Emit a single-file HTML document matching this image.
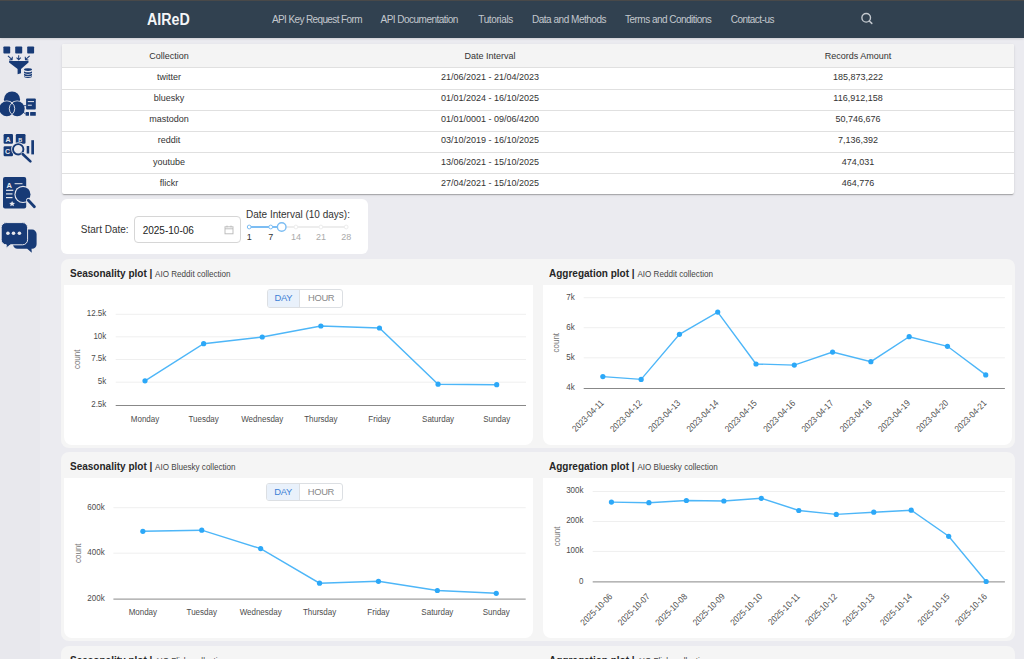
<!DOCTYPE html>
<html><head><meta charset="utf-8"><title>AIReD</title>
<style>
*{box-sizing:border-box;margin:0;padding:0}
html,body{width:1024px;height:659px;overflow:hidden}
body{background:#ebebf0;font-family:"Liberation Sans", sans-serif;position:relative}
.abs{position:absolute}
#topline{left:0;top:0;width:1024px;height:1px;background:#4a4a4a}
#hdr{left:0;top:1px;width:1024px;height:37.3px;background:#314150;box-shadow:0 1px 2px rgba(0,0,0,.12);z-index:3}
#side{left:0;top:38px;width:40px;height:621px;background:#e8e8ed}
.nav{position:absolute;top:13.3px;font-size:10px;color:#c3c8ce;white-space:nowrap;line-height:12px}
#logo{position:absolute;left:147.3px;top:10px;font-size:16px;font-weight:bold;color:#f4f5f7;line-height:18px;transform:scaleX(0.89);transform-origin:0 0}
#tbl{left:62px;top:44px;width:952px;height:149.5px;background:#fff;border-radius:2px;overflow:hidden;box-shadow:0 2px 1px -1px rgba(0,0,0,.17),0 1px 1px 0 rgba(0,0,0,.1),0 1px 3px 0 rgba(0,0,0,.1);font-size:9px;color:#333}
.row{position:absolute;left:0;width:953px;height:21px;border-top:1px solid #e2e2e2}
.row span{position:absolute;top:5.5px;line-height:10px;white-space:nowrap}
#tbl span{position:absolute;line-height:10px;white-space:nowrap}
.c1{left:107px;transform:translateX(-50%)}
.c2{left:428px;transform:translateX(-50%)}
.c3{left:796px;transform:translateX(-50%)}
#filter{left:61px;top:199px;width:307px;height:55px;background:#fff;border-radius:6px}
.rowc{position:absolute;left:61px;width:954px;height:188.5px;background:#f5f5f5;border-radius:8px}
.plot{position:absolute;background:#fff;border-radius:0 0 8px 8px;height:160px}
.ttl{position:absolute;white-space:nowrap;font-size:11.5px;font-weight:bold;color:#262626;line-height:12px;transform:scaleX(0.87);transform-origin:0 0}
.ttl span{font-weight:normal;font-size:9.3px;color:#444}
svg text.tk{font-family:"Liberation Sans", sans-serif;font-size:9px;fill:#4d4d4d}
svg text.cnt{fill:#777}
.seg{position:absolute;width:76.5px;height:18.5px;border:1px solid #dcdfe3;border-radius:3px;background:#fff;font-size:9px;overflow:hidden}
.seg .d{position:absolute;left:0;top:0;width:32.8px;letter-spacing:-0.3px;font-size:9.4px;height:100%;background:#e9f1fb;border-right:1px solid #dcdfe3;color:#3d7fd6;text-align:center;line-height:16.5px}
.seg .h{position:absolute;left:32.8px;letter-spacing:-0.35px;font-size:9.4px;top:0;right:0;height:100%;color:#888;text-align:center;line-height:16.5px}
</style></head><body>
<div id="topline" class="abs"></div>
<div id="hdr" class="abs">
 <div id="logo">AIReD</div>
 <div class="nav" style="left:272px;letter-spacing:-0.62px">API Key Request Form</div>
 <div class="nav" style="left:380.5px;letter-spacing:-0.52px">API Documentation</div>
 <div class="nav" style="left:478.3px;letter-spacing:-0.38px">Tutorials</div>
 <div class="nav" style="left:532px;letter-spacing:-0.48px">Data and Methods</div>
 <div class="nav" style="left:625px;letter-spacing:-0.52px">Terms and Conditions</div>
 <div class="nav" style="left:730.7px;letter-spacing:-0.5px">Contact-us</div>
 <svg class="abs" style="left:858px;top:10px" width="18" height="18" viewBox="858 11 18 18">
  <circle cx="866.2" cy="17.8" r="4.3" fill="none" stroke="#c4c9cf" stroke-width="1.4"/>
  <path d="M869.3 21 L871.8 23.4" stroke="#c4c9cf" stroke-width="1.5" stroke-linecap="round"/>
 </svg>
</div>
<div id="side" class="abs"></div>

<svg class="ic" width="40" height="621" viewBox="0 38 40 621" style="position:absolute;left:0;top:38px">
 <g fill="#173a76">
  <!-- icon1 funnel -->
  <rect x="3.4" y="46.4" width="6.8" height="7.2" rx="0.8"/>
  <rect x="15.2" y="46.4" width="7" height="7.2" rx="0.8"/>
  <rect x="27.2" y="46.4" width="6.9" height="7.2" rx="0.8"/>
  <path d="M8.3 55.6 L11.6 58.6 L11.9 56.8 L12.9 56.8 L12.6 60.2 L9.2 60.5 L9.2 59.5 L10.9 59.3 L7.6 56.3Z"/>
  <path d="M18.2 55.2 h1 v3.4 l1.3-1.3 0.7 0.7 -2.5 2.4 -2.5-2.4 0.7-0.7 1.3 1.3Z"/>
  <path d="M29.3 55.6 L26 58.6 L25.7 56.8 L24.7 56.8 L25 60.2 L28.4 60.5 L28.4 59.5 L26.7 59.3 L30 56.3Z"/>
  <path d="M9.1 61.1 H28.5 V62.6 L21 69 V73.3 L17.6 74.2 V69 L9.1 62.6Z"/>
  <ellipse cx="28" cy="69.6" rx="4" ry="1.4"/>
  <path d="M24 70.9 a4 1.4 0 0 0 8 0 v1.6 a4 1.4 0 0 1 -8 0Z"/>
  <path d="M24 73.3 a4 1.4 0 0 0 8 0 v1.6 a4 1.4 0 0 1 -8 0Z"/>
  <path d="M24 75.7 a4 1.4 0 0 0 8 0 v0.8 a4 1.4 0 0 1 -8 0Z"/>
 </g>
 <g>
  <!-- icon2 venn -->
  <circle cx="12" cy="99.5" r="8.1" fill="#173a76"/>
  <circle cx="6.8" cy="108.7" r="7.5" fill="#e8e8ed" stroke="#e8e8ed" stroke-width="1.6"/>
  <circle cx="17.2" cy="108.7" r="7.5" fill="#e8e8ed" stroke="#e8e8ed" stroke-width="1.6"/>
  <circle cx="6.8" cy="108.7" r="7.5" fill="#173a76"/>
  <circle cx="17.2" cy="108.7" r="7.5" fill="#173a76"/>
  <path d="M12 102.9 A7.5 7.5 0 0 1 12 114.5 A7.5 7.5 0 0 1 12 102.9Z" fill="#173a76" stroke="#e8e8ed" stroke-width="0.9"/>
  <rect x="26.1" y="98.4" width="9.7" height="11" rx="0.9" fill="#173a76"/>
  <rect x="27.8" y="101.1" width="6.2" height="1" fill="#e8e8ed"/>
  <rect x="27.8" y="104.7" width="4" height="1" fill="#e8e8ed"/>
  <path d="M23.5 105.6 H26.3" stroke="#173a76" stroke-width="0.8"/>
  <path d="M23 112.2 L25.6 113.9" stroke="#173a76" stroke-width="0.9"/>
  <rect x="25.6" y="112" width="3.4" height="3.8" rx="0.5" fill="#173a76"/>
  <rect x="30.1" y="112" width="5.7" height="3.8" rx="0.5" fill="#173a76"/>
 </g>
 <g fill="#173a76">
  <!-- icon3 abc magnifier -->
  <rect x="3.6" y="134.1" width="9.4" height="9.7" rx="1.2"/>
  <rect x="15.8" y="134.1" width="9.7" height="9.7" rx="1.2"/>
  <rect x="3.6" y="146.2" width="9.4" height="10.1" rx="1.2"/>
  <rect x="26.7" y="146" width="2.5" height="7.5"/>
  <rect x="31.3" y="140.2" width="2.7" height="14.2"/>
 </g>
 <g fill="none" stroke="#e8e8ed" stroke-width="1.6"><circle cx="18.2" cy="149.3" r="6.2"/></g>
 <circle cx="18.2" cy="149.3" r="5.1" fill="#e8e8ed"/>
 <circle cx="18.2" cy="149.3" r="5.2" fill="none" stroke="#173a76" stroke-width="1.9"/>
 <path d="M22.6 154 L30.4 161.4" stroke="#e8e8ed" stroke-width="3.8" stroke-linecap="round"/>
 <path d="M22.6 154 L30.4 161.4" stroke="#173a76" stroke-width="2.6" stroke-linecap="round"/>
 <g fill="#e8e8ed" font-family="Liberation Sans" font-weight="bold" font-size="7">
  <text x="5.4" y="142">A</text><text x="18.3" y="141.6" font-size="5.5">B</text><text x="5" y="154">C</text>
 </g>
 <g fill="#173a76">
  <!-- icon4 document -->
  <rect x="3" y="177" width="23.2" height="31.4" rx="2"/>
 </g>
 <g fill="#e8e8ed">
  <text x="6.4" y="187.5" font-family="Liberation Sans" font-weight="bold" font-size="7.5">A</text>
  <rect x="14.6" y="183.2" width="7.9" height="1"/>
  <rect x="6" y="189.7" width="7.3" height="1.2"/>
  <rect x="6" y="193.3" width="6.5" height="1.2"/>
  <rect x="6" y="197" width="6.5" height="1.2"/>
  <path d="M12.1 200.9 l0.9 1.9 2.05 0.2 -1.55 1.35 0.45 2 -1.85-1.05 -1.85 1.05 0.45-2 -1.55-1.35 2.05-0.2Z"/>
 </g>
 <circle cx="23" cy="194.4" r="8.6" fill="#e8e8ed"/>
 <circle cx="23" cy="194.4" r="7.5" fill="#173a76"/>
 <path d="M28.3 200.2 L34.4 206.8" stroke="#e8e8ed" stroke-width="4.4" stroke-linecap="round"/>
 <path d="M28.3 200.2 L34.4 206.8" stroke="#173a76" stroke-width="2.8" stroke-linecap="round"/>
 <g fill="#173a76">
  <!-- icon5 chat -->
  <path d="M17.5 229.6 h14.6 a4.5 4.5 0 0 1 4.5 4.5 v10.2 a4.5 4.5 0 0 1 -4.5 4.5 h-0.6 l0.3 3.9 -4.6-3.9 h-9.7 a4.5 4.5 0 0 1 -4.5 -4.5 v-10.2 a4.5 4.5 0 0 1 4.5 -4.5Z"/>
 </g>
 <path d="M6.2 222.6 h16.4 a5 5 0 0 1 5 5 v12.2 a5 5 0 0 1 -5 5 h-12 l-4.6 3.4 0.3-3.4 h-0.1 a5 5 0 0 1 -5 -5 v-12.2 a5 5 0 0 1 5 -5Z" fill="#173a76" stroke="#e8e8ed" stroke-width="1"/>
 <g fill="#e8e8ed"><circle cx="7.9" cy="233.3" r="1.8"/><circle cx="13.5" cy="233.3" r="1.8"/><circle cx="19.4" cy="233.3" r="1.8"/></g>
</svg>

<div id="tbl" class="abs">
 <div class="abs" style="left:0;top:0;width:952px;height:23px;background:#f4f4f4"></div>
 <div class="abs" style="left:0;top:23px;width:952px;height:1px;background:#e0e0e0"></div>
 <div class="abs" style="left:0;top:45px;width:952px;height:1px;background:#e0e0e0"></div>
 <div class="abs" style="left:0;top:66px;width:952px;height:1px;background:#e0e0e0"></div>
 <div class="abs" style="left:0;top:87px;width:952px;height:1px;background:#e0e0e0"></div>
 <div class="abs" style="left:0;top:108px;width:952px;height:1px;background:#e0e0e0"></div>
 <div class="abs" style="left:0;top:129px;width:952px;height:1px;background:#e0e0e0"></div>
 <span class="c1" style="top:6.5px">Collection</span><span class="c2" style="top:6.5px">Date Interval</span><span class="c3" style="top:6.5px">Records Amount</span>
 <span class="c1" style="top:27.9px">twitter</span><span class="c2" style="top:27.9px">21/06/2021 - 21/04/2023</span><span class="c3" style="top:27.9px">185,873,222</span>
 <span class="c1" style="top:48.9px">bluesky</span><span class="c2" style="top:48.9px">01/01/2024 - 16/10/2025</span><span class="c3" style="top:48.9px">116,912,158</span>
 <span class="c1" style="top:69.9px">mastodon</span><span class="c2" style="top:69.9px">01/01/0001 - 09/06/4200</span><span class="c3" style="top:69.9px">50,746,676</span>
 <span class="c1" style="top:91.1px">reddit</span><span class="c2" style="top:91.1px">03/10/2019 - 16/10/2025</span><span class="c3" style="top:91.1px">7,136,392</span>
 <span class="c1" style="top:112.9px">youtube</span><span class="c2" style="top:112.9px">13/06/2021 - 15/10/2025</span><span class="c3" style="top:112.9px">474,031</span>
 <span class="c1" style="top:133.5px">flickr</span><span class="c2" style="top:133.5px">27/04/2021 - 15/10/2025</span><span class="c3" style="top:133.5px">464,776</span>
</div>
<div id="filter" class="abs">
 <div class="abs" style="left:19.8px;top:25px;font-size:10px;color:#333;line-height:12px;white-space:nowrap">Start Date:</div>
 <div class="abs" style="left:73.2px;top:17.2px;width:106.4px;height:27px;border:1px solid #d6d6d6;border-radius:4px;background:#fff">
  <div class="abs" style="left:7.5px;top:7.8px;font-size:10px;color:#222;line-height:12px">2025-10-06</div>
  <svg class="abs" style="left:89px;top:8px" width="10" height="10" viewBox="0 0 10 10"><rect x="1" y="1.8" width="8" height="7" fill="none" stroke="#b9b9b9" stroke-width="0.9"/><path d="M1 3.8 H9" stroke="#b9b9b9" stroke-width="0.9"/><path d="M3 0.6 V2.4 M7 0.6 V2.4" stroke="#b9b9b9" stroke-width="0.9"/></svg>
 </div>
 <div class="abs" style="left:185px;top:9.5px;font-size:10px;color:#333;line-height:12px;white-space:nowrap">Date Interval (10 days):</div>
 <svg class="abs" style="left:180px;top:18px" width="120" height="30" viewBox="241 217 120 30">
  <rect x="247.5" y="226" width="100" height="2" rx="1" fill="#ededed"/>
  <rect x="247.5" y="226" width="34" height="2" rx="1" fill="#7cbdf3"/>
  <circle cx="249.2" cy="227" r="1.9" fill="#fff" stroke="#7cbdf3" stroke-width="1"/>
  <circle cx="270.7" cy="227" r="1.9" fill="#fff" stroke="#7cbdf3" stroke-width="1"/>
  <circle cx="295.9" cy="227" r="1.9" fill="#fff" stroke="#ededed" stroke-width="1"/>
  <circle cx="320.9" cy="227" r="1.9" fill="#fff" stroke="#ededed" stroke-width="1"/>
  <circle cx="346.2" cy="227" r="1.9" fill="#fff" stroke="#ededed" stroke-width="1"/>
  <circle cx="281.7" cy="227" r="4.3" fill="#fff" stroke="#7cbdf3" stroke-width="1.4"/>
  <g font-family="Liberation Sans" font-size="9" text-anchor="middle">
   <text x="249.2" y="239.5" fill="#333">1</text>
   <text x="270.7" y="239.5" fill="#333">7</text>
   <text x="295.9" y="239.5" fill="#aaa">14</text>
   <text x="320.9" y="239.5" fill="#aaa">21</text>
   <text x="346.2" y="239.5" fill="#aaa">28</text>
  </g>
 </svg>
</div>

<div class="rowc" style="top:259.3px"></div>
<div class="plot" style="left:64px;top:284.5px;width:469px"></div>
<div class="plot" style="left:543px;top:284.5px;width:469px"></div>
<div class="ttl" style="left:69.8px;top:266.7px">Seasonality plot | <span>AIO Reddit collection</span></div>
<div class="ttl" style="left:548.7px;top:266.7px">Aggregation plot | <span>AIO Reddit collection</span></div>
<div class="seg" style="left:266.5px;top:289px"><div class="d">DAY</div><div class="h">HOUR</div></div>

<div class="rowc" style="top:452.3px"></div>
<div class="plot" style="left:64px;top:477.5px;width:469px"></div>
<div class="plot" style="left:543px;top:477.5px;width:469px"></div>
<div class="ttl" style="left:69.8px;top:459.8px">Seasonality plot | <span>AIO Bluesky collection</span></div>
<div class="ttl" style="left:548.7px;top:459.8px">Aggregation plot | <span>AIO Bluesky collection</span></div>
<div class="seg" style="left:266.3px;top:482.5px"><div class="d">DAY</div><div class="h">HOUR</div></div>

<div class="rowc" style="top:645.8px"></div>
<div class="ttl" style="left:69.8px;top:654px">Seasonality plot | <span>AIO Flickr collection</span></div>
<div class="ttl" style="left:548.7px;top:654px">Aggregation plot | <span>AIO Flickr collection</span></div>

<svg class="abs" style="left:0;top:0;z-index:1" width="1024" height="659" viewBox="0 0 1024 659">
<line x1="115.7" y1="314.3" x2="526" y2="314.3" stroke="#efefef" stroke-width="1"/>
<line x1="115.7" y1="336.8" x2="526" y2="336.8" stroke="#efefef" stroke-width="1"/>
<line x1="115.7" y1="359.5" x2="526" y2="359.5" stroke="#efefef" stroke-width="1"/>
<line x1="115.7" y1="382.2" x2="526" y2="382.2" stroke="#efefef" stroke-width="1"/>
<line x1="115.7" y1="405.5" x2="526" y2="405.5" stroke="#888" stroke-width="1"/>
<text transform="translate(106.3 316.2) scale(0.89 1)" text-anchor="end" class="tk">12.5k</text>
<text transform="translate(106.3 338.7) scale(0.89 1)" text-anchor="end" class="tk">10k</text>
<text transform="translate(106.3 361.4) scale(0.89 1)" text-anchor="end" class="tk">7.5k</text>
<text transform="translate(106.3 384.1) scale(0.89 1)" text-anchor="end" class="tk">5k</text>
<text transform="translate(106.3 407.4) scale(0.89 1)" text-anchor="end" class="tk">2.5k</text>
<text transform="translate(145.01 421.8) scale(0.89 1)" text-anchor="middle" class="tk">Monday</text>
<text transform="translate(203.62 421.8) scale(0.89 1)" text-anchor="middle" class="tk">Tuesday</text>
<text transform="translate(262.24 421.8) scale(0.89 1)" text-anchor="middle" class="tk">Wednesday</text>
<text transform="translate(320.85 421.8) scale(0.89 1)" text-anchor="middle" class="tk">Thursday</text>
<text transform="translate(379.46 421.8) scale(0.89 1)" text-anchor="middle" class="tk">Friday</text>
<text transform="translate(438.08 421.8) scale(0.89 1)" text-anchor="middle" class="tk">Saturday</text>
<text transform="translate(496.69 421.8) scale(0.89 1)" text-anchor="middle" class="tk">Sunday</text>
<polyline points="145.01,380.8 203.62,343.7 262.24,337 320.85,326 379.46,328 438.08,384.2 496.69,384.7" fill="none" stroke="#4db6f8" stroke-width="1.4"/>
<circle cx="145.01" cy="380.8" r="2.6" fill="#2ca8f8"/>
<circle cx="203.62" cy="343.7" r="2.6" fill="#2ca8f8"/>
<circle cx="262.24" cy="337" r="2.6" fill="#2ca8f8"/>
<circle cx="320.85" cy="326" r="2.6" fill="#2ca8f8"/>
<circle cx="379.46" cy="328" r="2.6" fill="#2ca8f8"/>
<circle cx="438.08" cy="384.2" r="2.6" fill="#2ca8f8"/>
<circle cx="496.69" cy="384.7" r="2.6" fill="#2ca8f8"/>
<text text-anchor="middle" class="tk cnt" transform="translate(79.6 359.3) rotate(-90) scale(0.89 1)">count</text>
<line x1="583.7" y1="297.7" x2="1004.9" y2="297.7" stroke="#efefef" stroke-width="1"/>
<line x1="583.7" y1="327.7" x2="1004.9" y2="327.7" stroke="#efefef" stroke-width="1"/>
<line x1="583.7" y1="357.8" x2="1004.9" y2="357.8" stroke="#efefef" stroke-width="1"/>
<line x1="583.7" y1="388.5" x2="1004.9" y2="388.5" stroke="#888" stroke-width="1"/>
<text transform="translate(574.7 299.6) scale(0.89 1)" text-anchor="end" class="tk">7k</text>
<text transform="translate(574.7 329.6) scale(0.89 1)" text-anchor="end" class="tk">6k</text>
<text transform="translate(574.7 359.7) scale(0.89 1)" text-anchor="end" class="tk">5k</text>
<text transform="translate(574.7 390.4) scale(0.89 1)" text-anchor="end" class="tk">4k</text>
<text text-anchor="end" class="tk" transform="translate(604.35 403.7) rotate(-45) scale(0.89 1)">2023-04-11</text>
<text text-anchor="end" class="tk" transform="translate(642.64 403.7) rotate(-45) scale(0.89 1)">2023-04-12</text>
<text text-anchor="end" class="tk" transform="translate(680.93 403.7) rotate(-45) scale(0.89 1)">2023-04-13</text>
<text text-anchor="end" class="tk" transform="translate(719.22 403.7) rotate(-45) scale(0.89 1)">2023-04-14</text>
<text text-anchor="end" class="tk" transform="translate(757.51 403.7) rotate(-45) scale(0.89 1)">2023-04-15</text>
<text text-anchor="end" class="tk" transform="translate(795.8 403.7) rotate(-45) scale(0.89 1)">2023-04-16</text>
<text text-anchor="end" class="tk" transform="translate(834.09 403.7) rotate(-45) scale(0.89 1)">2023-04-17</text>
<text text-anchor="end" class="tk" transform="translate(872.38 403.7) rotate(-45) scale(0.89 1)">2023-04-18</text>
<text text-anchor="end" class="tk" transform="translate(910.67 403.7) rotate(-45) scale(0.89 1)">2023-04-19</text>
<text text-anchor="end" class="tk" transform="translate(948.96 403.7) rotate(-45) scale(0.89 1)">2023-04-20</text>
<text text-anchor="end" class="tk" transform="translate(987.25 403.7) rotate(-45) scale(0.89 1)">2023-04-21</text>
<polyline points="602.85,376.6 641.14,379.4 679.43,334.3 717.72,312.1 756.01,364 794.3,365.1 832.59,352.1 870.88,361.7 909.17,336.7 947.46,346.3 985.75,374.9" fill="none" stroke="#4db6f8" stroke-width="1.4"/>
<circle cx="602.85" cy="376.6" r="2.6" fill="#2ca8f8"/>
<circle cx="641.14" cy="379.4" r="2.6" fill="#2ca8f8"/>
<circle cx="679.43" cy="334.3" r="2.6" fill="#2ca8f8"/>
<circle cx="717.72" cy="312.1" r="2.6" fill="#2ca8f8"/>
<circle cx="756.01" cy="364" r="2.6" fill="#2ca8f8"/>
<circle cx="794.3" cy="365.1" r="2.6" fill="#2ca8f8"/>
<circle cx="832.59" cy="352.1" r="2.6" fill="#2ca8f8"/>
<circle cx="870.88" cy="361.7" r="2.6" fill="#2ca8f8"/>
<circle cx="909.17" cy="336.7" r="2.6" fill="#2ca8f8"/>
<circle cx="947.46" cy="346.3" r="2.6" fill="#2ca8f8"/>
<circle cx="985.75" cy="374.9" r="2.6" fill="#2ca8f8"/>
<text text-anchor="middle" class="tk cnt" transform="translate(559.4 342.7) rotate(-90) scale(0.89 1)">count</text>
<line x1="113.4" y1="507.7" x2="525.7" y2="507.7" stroke="#efefef" stroke-width="1"/>
<line x1="113.4" y1="553.2" x2="525.7" y2="553.2" stroke="#efefef" stroke-width="1"/>
<line x1="113.4" y1="599.1" x2="525.7" y2="599.1" stroke="#888" stroke-width="1"/>
<text transform="translate(104.7 509.6) scale(0.89 1)" text-anchor="end" class="tk">600k</text>
<text transform="translate(104.7 555.1) scale(0.89 1)" text-anchor="end" class="tk">400k</text>
<text transform="translate(104.7 601) scale(0.89 1)" text-anchor="end" class="tk">200k</text>
<text transform="translate(142.85 615.2) scale(0.89 1)" text-anchor="middle" class="tk">Monday</text>
<text transform="translate(201.75 615.2) scale(0.89 1)" text-anchor="middle" class="tk">Tuesday</text>
<text transform="translate(260.65 615.2) scale(0.89 1)" text-anchor="middle" class="tk">Wednesday</text>
<text transform="translate(319.55 615.2) scale(0.89 1)" text-anchor="middle" class="tk">Thursday</text>
<text transform="translate(378.45 615.2) scale(0.89 1)" text-anchor="middle" class="tk">Friday</text>
<text transform="translate(437.35 615.2) scale(0.89 1)" text-anchor="middle" class="tk">Saturday</text>
<text transform="translate(496.25 615.2) scale(0.89 1)" text-anchor="middle" class="tk">Sunday</text>
<polyline points="142.85,531.3 201.75,530.2 260.65,548.6 319.55,583.2 378.45,581.3 437.35,590.5 496.25,593.3" fill="none" stroke="#4db6f8" stroke-width="1.4"/>
<circle cx="142.85" cy="531.3" r="2.6" fill="#2ca8f8"/>
<circle cx="201.75" cy="530.2" r="2.6" fill="#2ca8f8"/>
<circle cx="260.65" cy="548.6" r="2.6" fill="#2ca8f8"/>
<circle cx="319.55" cy="583.2" r="2.6" fill="#2ca8f8"/>
<circle cx="378.45" cy="581.3" r="2.6" fill="#2ca8f8"/>
<circle cx="437.35" cy="590.5" r="2.6" fill="#2ca8f8"/>
<circle cx="496.25" cy="593.3" r="2.6" fill="#2ca8f8"/>
<text text-anchor="middle" class="tk cnt" transform="translate(80.9 553.2) rotate(-90) scale(0.89 1)">count</text>
<line x1="592.7" y1="491.5" x2="1004.9" y2="491.5" stroke="#efefef" stroke-width="1"/>
<line x1="592.7" y1="521.5" x2="1004.9" y2="521.5" stroke="#efefef" stroke-width="1"/>
<line x1="592.7" y1="551.4" x2="1004.9" y2="551.4" stroke="#efefef" stroke-width="1"/>
<line x1="592.7" y1="581.9" x2="1004.9" y2="581.9" stroke="#888" stroke-width="1"/>
<text transform="translate(583.5 493.4) scale(0.89 1)" text-anchor="end" class="tk">300k</text>
<text transform="translate(583.5 523.4) scale(0.89 1)" text-anchor="end" class="tk">200k</text>
<text transform="translate(583.5 553.3) scale(0.89 1)" text-anchor="end" class="tk">100k</text>
<text transform="translate(583.5 583.8) scale(0.89 1)" text-anchor="end" class="tk">0</text>
<text text-anchor="end" class="tk" transform="translate(612.94 597.1) rotate(-45) scale(0.89 1)">2025-10-06</text>
<text text-anchor="end" class="tk" transform="translate(650.41 597.1) rotate(-45) scale(0.89 1)">2025-10-07</text>
<text text-anchor="end" class="tk" transform="translate(687.88 597.1) rotate(-45) scale(0.89 1)">2025-10-08</text>
<text text-anchor="end" class="tk" transform="translate(725.35 597.1) rotate(-45) scale(0.89 1)">2025-10-09</text>
<text text-anchor="end" class="tk" transform="translate(762.83 597.1) rotate(-45) scale(0.89 1)">2025-10-10</text>
<text text-anchor="end" class="tk" transform="translate(800.3 597.1) rotate(-45) scale(0.89 1)">2025-10-11</text>
<text text-anchor="end" class="tk" transform="translate(837.77 597.1) rotate(-45) scale(0.89 1)">2025-10-12</text>
<text text-anchor="end" class="tk" transform="translate(875.25 597.1) rotate(-45) scale(0.89 1)">2025-10-13</text>
<text text-anchor="end" class="tk" transform="translate(912.72 597.1) rotate(-45) scale(0.89 1)">2025-10-14</text>
<text text-anchor="end" class="tk" transform="translate(950.19 597.1) rotate(-45) scale(0.89 1)">2025-10-15</text>
<text text-anchor="end" class="tk" transform="translate(987.66 597.1) rotate(-45) scale(0.89 1)">2025-10-16</text>
<polyline points="611.44,502.1 648.91,502.7 686.38,500.5 723.85,501 761.33,498.3 798.8,510.5 836.27,514.4 873.75,512.2 911.22,510.2 948.69,536.3 986.16,581.5" fill="none" stroke="#4db6f8" stroke-width="1.4"/>
<circle cx="611.44" cy="502.1" r="2.6" fill="#2ca8f8"/>
<circle cx="648.91" cy="502.7" r="2.6" fill="#2ca8f8"/>
<circle cx="686.38" cy="500.5" r="2.6" fill="#2ca8f8"/>
<circle cx="723.85" cy="501" r="2.6" fill="#2ca8f8"/>
<circle cx="761.33" cy="498.3" r="2.6" fill="#2ca8f8"/>
<circle cx="798.8" cy="510.5" r="2.6" fill="#2ca8f8"/>
<circle cx="836.27" cy="514.4" r="2.6" fill="#2ca8f8"/>
<circle cx="873.75" cy="512.2" r="2.6" fill="#2ca8f8"/>
<circle cx="911.22" cy="510.2" r="2.6" fill="#2ca8f8"/>
<circle cx="948.69" cy="536.3" r="2.6" fill="#2ca8f8"/>
<circle cx="986.16" cy="581.5" r="2.6" fill="#2ca8f8"/>
<text text-anchor="middle" class="tk cnt" transform="translate(559.8 536.4) rotate(-90) scale(0.89 1)">count</text>
</svg>
</body></html>
